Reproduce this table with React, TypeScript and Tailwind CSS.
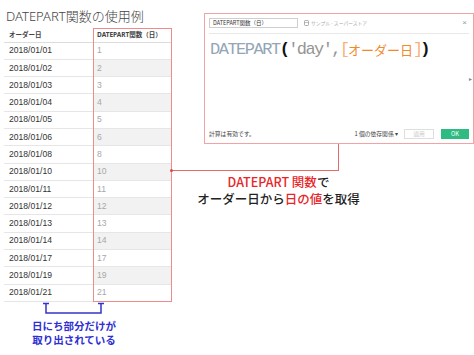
const ROWS = [
  ['2018/01/01', '1'],
  ['2018/01/02', '2'],
  ['2018/01/03', '3'],
  ['2018/01/04', '4'],
  ['2018/01/05', '5'],
  ['2018/01/06', '6'],
  ['2018/01/08', '8'],
  ['2018/01/10', '10'],
  ['2018/01/11', '11'],
  ['2018/01/12', '12'],
  ['2018/01/13', '13'],
  ['2018/01/14', '14'],
  ['2018/01/17', '17'],
  ['2018/01/19', '19'],
  ['2018/01/21', '21'],
]

const JP = "font-['Noto_Sans','Noto_Sans_CJK_JP',sans-serif]"
const CJK = "font-['Noto_Sans_CJK_JP',sans-serif]"
const MONO = "font-['Liberation_Mono',monospace] text-[17px]"

function DataTable() {
  return (
    <div className="relative mt-[4px] w-[168px]">
      <div className={`flex h-[14.5px] items-center border-b border-[#dcdcdc] text-[6.5px] font-bold text-[#444] ${JP}`}>
        <div className="w-[89px] pl-[5px]">オーダー日</div>
        <div className="w-[79px] pl-[4px]">DATEPART関数（日）</div>
      </div>
      {ROWS.map(([d, n], i) => (
        <div
          key={d}
          className="flex h-[17.3px] items-center border-b border-[#e6e6e6] font-['Liberation_Sans',sans-serif] text-[8.6px]"
        >
          <div className="w-[89px] pl-[5px] text-[#333]">{d}</div>
          <div className={`flex h-full w-[79px] items-center pl-[4px] text-[#a8a8a8] ${i % 2 ? 'bg-[#f2f2f2]' : 'bg-white'}`}>
            {n}
          </div>
        </div>
      ))}
      {/* red highlight round the result column */}
      <div className="pointer-events-none absolute bottom-[-0.5px] left-[89px] top-0 w-[79px] border border-[#ee8c8c]" />
    </div>
  )
}

function CalcDialog() {
  return (
    <div className="ml-[32px] flex h-[131px] w-[270px] flex-col border-[1.5px] border-[#f2a3a3] bg-white px-[4px] pt-[4px]">
      <div className="flex items-center border-b border-[#e8e8e8] pb-[5px]">
        <div className={`flex h-[10px] w-[89px] items-center border border-[#cfcfcf] pl-[3px] text-[5.5px] text-[#333] ${CJK}`}>
          DATEPART関数（日）
        </div>
        <div className={`ml-[6px] flex items-center gap-[2px] text-[4.8px] text-[#aaa] ${CJK}`}>
          <svg width="5" height="6" viewBox="0 0 5 6">
            <rect x="0.5" y="0.5" width="4" height="5" rx="0.8" fill="none" stroke="#999" strokeWidth="0.8" />
            <line x1="0.5" y1="2.5" x2="4.5" y2="2.5" stroke="#999" strokeWidth="0.6" />
          </svg>
          サンプル - スーパーストア
        </div>
        <div className="ml-auto mr-[2px] font-['Liberation_Sans',sans-serif] text-[8px] leading-none text-[#999]">×</div>
      </div>
      <div className="mt-[7px] flex items-center pl-[1px] leading-none">
        <span className={`${MONO} tracking-[-1.5px] text-[#93a5b6]`}>DATEPART</span>
        <span className={`${MONO} font-bold tracking-[-1.6px] text-[#111]`}>(</span>
        <span className={`${MONO} tracking-[-1.6px] text-[#959595]`}>'day',</span>
        <span className={`${MONO} tracking-[-2px] text-[#f6b27a]`}>[</span>
        <span className={`text-[13px] text-[#f08a2c] ${CJK}`}>オーダー日</span>
        <span className={`${MONO} tracking-[-3px] text-[#f6b27a]`}>]</span>
        <span className={`${MONO} font-bold text-[#111]`}>)</span>
      </div>
      <div className="mr-[-3px] mt-[18px] self-end text-[6px] leading-none text-[#888]">▸</div>
      <div className={`mt-auto mb-[4px] flex items-center text-[5.8px] text-[#444] ${CJK}`}>
        <span>計算は有効です。</span>
        <span className="ml-auto">1 個の依存関係 ▾</span>
        <span className="ml-[6px] flex h-[10px] w-[30px] items-center justify-center border border-[#dedede] text-[#ccc]">適用</span>
        <span className="ml-[7px] flex h-[10px] w-[28px] items-center justify-center bg-[#2dbb82] text-white">OK</span>
      </div>
    </div>
  )
}

export default function App() {
  return (
    <div className="relative flex h-[355px] w-[474px] overflow-hidden bg-white">
      {/* LEFT: table */}
      <div className="flex w-[172px] flex-col pl-[4px] pt-[8px]">
        <h1 className={`ml-[2px] text-[13px] font-light leading-[16px] text-[#444] ${JP}`}>DATEPART関数の使用例</h1>
        <DataTable />
        <svg className="ml-[38px]" width="64" height="12" viewBox="0 0 64 12">
          <g stroke="#3434c8" strokeWidth="1.5" fill="none">
            <path d="M1 1.5h6M4 1.5V11H59V1.5M56 1.5h6" />
          </g>
        </svg>
        <div className={`mt-[5px] w-[140px] text-center text-[10.5px] font-bold leading-[14px] text-[#2f2fd2] ${CJK}`}>
          日にち部分だけが
          <br />
          取り出されている
        </div>
      </div>

      {/* RIGHT: calc editor + caption */}
      <div className="flex flex-1 flex-col pt-[13px]">
        <CalcDialog />
        <div className={`mt-[28.5px] w-[213px] text-center text-[12.5px] font-medium leading-[17px] text-[#222] ${CJK}`}>
          <span className="text-[#e8262a]">DATEPART 関数</span>で
          <br />
          オーダー日から<span className="text-[#e8262a]">日の値</span>を取得
        </div>
      </div>

      {/* connector from dialog to table */}
      <div className="absolute left-[338px] top-[144px] h-[26px] w-px bg-[#e36b6b]" />
      <div className="absolute left-[171px] top-[170px] h-px w-[168px] bg-[#e36b6b]" />
      <div className="absolute left-[170px] top-[169px] h-[3px] w-[3px] rounded-full bg-[#d94a4a]" />
    </div>
  )
}
